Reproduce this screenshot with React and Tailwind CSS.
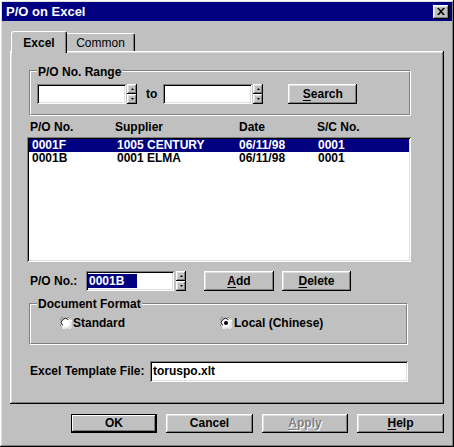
import React from 'react';

const raised = 'shadow-[inset_-1px_-1px_0_#000,inset_1px_1px_0_#fff,inset_-2px_-2px_0_#808080,inset_2px_2px_0_#dfdfdf]';
const sunken = 'shadow-[inset_1px_1px_0_#808080,inset_-1px_-1px_0_#fff,inset_2px_2px_0_#000,inset_-2px_-2px_0_#dfdfdf]';

const Spinner = ({ className = '' }) => (
  <div className={`flex flex-col w-[10px] h-[20px] ${className}`}>
    <div className={`h-[10px] flex items-center justify-center bg-[#c0c0c0] ${raised}`}>
      <svg width="3" height="2" viewBox="0 0 3 2"><path d="M1.5 0L3 2H0z" fill="#000" /></svg>
    </div>
    <div className={`h-[10px] flex items-center justify-center bg-[#c0c0c0] ${raised}`}>
      <svg width="3" height="2" viewBox="0 0 3 2"><path d="M0 0H3L1.5 2z" fill="#000" /></svg>
    </div>
  </div>
);

const Button = ({ children, className = '', def = false }) => (
  <div
    className={`flex items-center justify-center bg-[#c0c0c0] ${
      def
        ? 'shadow-[inset_0_0_0_1px_#000,inset_-2px_-2px_0_#000,inset_2px_2px_0_#fff,inset_-3px_-3px_0_#808080]'
        : raised
    } ${className}`}
  >
    {children}
  </div>
);

const Radio = ({ checked }) => (
  <svg width="12" height="12" viewBox="0 0 12 12" className="shrink-0">
    <circle cx="6" cy="6" r="5.5" fill="#fff" />
    <path d="M1.2 9.5A5.5 5.5 0 0 1 9.5 1.2" stroke="#808080" strokeWidth="1" fill="none" />
    <path d="M2.6 8.4A4 4 0 0 1 8.4 2.6" stroke="#000" strokeWidth="1" fill="none" />
    <path d="M10.8 2.5A5.5 5.5 0 0 1 2.5 10.8" stroke="#fff" strokeWidth="1" fill="none" />
    <path d="M9.4 3.6A4 4 0 0 1 3.6 9.4" stroke="#dfdfdf" strokeWidth="1" fill="none" />
    {checked && <circle cx="6" cy="6" r="2" fill="#000" />}
  </svg>
);

const Group = ({ title, titleTop, className = '', children }) => (
  <div className={`relative border border-t-[#808080] border-l-[#808080] border-b-white border-r-white ${className}`}>
    <div className="h-full border border-t-white border-l-white border-b-[#808080] border-r-[#808080]">
      {children}
    </div>
    <div className={`absolute left-[7px] ${titleTop} bg-[#c0c0c0] px-[1px] leading-[13px]`}>{title}</div>
  </div>
);

const rows = [
  { po: '0001F', sup: '1005 CENTURY', date: '06/11/98', sc: '0001', sel: true },
  { po: '0001B', sup: '0001 ELMA', date: '06/11/98', sc: '0001', sel: false },
];

export default function App() {
  return (
    <div
      className={`w-[454px] h-[447px] bg-[#c0c0c0] p-[2px] font-['Liberation_Sans',Arial,sans-serif] font-bold text-[12px] leading-[13px] text-black ${raised}`}
    >
      {/* title bar */}
      <div className="h-[19px] bg-[#000080] flex items-center justify-between pl-[4px] pr-[3px]">
        <span className="text-white text-[13px] leading-[14px]">P/O on Excel</span>
        <div className={`w-[16px] h-[14px] flex items-center justify-center ${raised} bg-[#c0c0c0]`}>
          <svg width="8" height="7" viewBox="0 0 8 7">
            <path d="M0 0h2l2 2.2L6 0h2L5 3.5 8 7H6L4 4.8 2 7H0l3-3.5z" fill="#000" />
          </svg>
        </div>
      </div>

      <div className="pl-[8px] pt-[10px]">
        {/* tabs */}
        <div className="flex items-end h-[20px] ml-[1px]">
          <div className="relative z-10 w-[56px] h-[22px] -mb-[2px] bg-[#c0c0c0] border-t border-l border-white border-r border-r-black rounded-t-[3px] shadow-[inset_-1px_0_0_#808080] flex justify-center pt-[5px]">
            Excel
          </div>
          <div className="w-[68px] h-[18px] bg-[#c0c0c0] border-t border-white border-r border-r-black rounded-tr-[3px] shadow-[inset_-1px_0_0_#808080] flex justify-center pt-[3px] font-normal">
            Common
          </div>
        </div>

        {/* panel */}
        <div className={`w-[434px] h-[353px] bg-[#c0c0c0] ${raised} flex flex-col`}>
          <Group title="P/O No. Range" titleTop="top-[-5px]" className="ml-[19px] mt-[19px] w-[382px] h-[46px]">
            <div className="flex items-center pt-[12px] pl-[6px]">
              <div className={`w-[89px] h-[20px] bg-white ${sunken}`} />
              <Spinner className="ml-[1px]" />
              <span className="ml-[9px] mr-[6px]">to</span>
              <div className={`w-[89px] h-[20px] bg-white ${sunken}`} />
              <Spinner className="ml-[1px]" />
              <Button className="ml-[25px] w-[69px] h-[20px]">
                <span><span className="underline underline-offset-2">S</span>earch</span>
              </Button>
            </div>
          </Group>

          {/* list headers */}
          <div className="grid grid-cols-[85px_124px_78px_1fr] ml-[20px] mt-[5px] h-[13px]">
            <span>P/O No.</span>
            <span>Supplier</span>
            <span>Date</span>
            <span>S/C No.</span>
          </div>

          {/* list */}
          <div className={`ml-[17px] mt-[3px] w-[384px] h-[125px] bg-white p-[2px] ${sunken}`}>
            {rows.map((r) => (
              <div
                key={r.po}
                className={`grid grid-cols-[85px_122px_79px_1fr] h-[13px] pl-[3px] ${r.sel ? 'bg-[#000080] text-white' : ''}`}
              >
                <span>{r.po}</span>
                <span>{r.sup}</span>
                <span>{r.date}</span>
                <span>{r.sc}</span>
              </div>
            ))}
          </div>

          {/* P/O No. row */}
          <div className="flex items-center ml-[20px] mt-[9px] h-[20px]">
            <span className="w-[56px]">P/O No.:</span>
            <div className={`w-[88px] h-[20px] bg-white ${sunken} flex items-center pl-[2px]`}>
              <span className="inline-block w-[49px] h-[14px] bg-[#000080] text-white leading-[14px] pl-[1px]">0001B</span>
            </div>
            <Spinner className="ml-[2px]" />
            <Button className="ml-[18px] w-[70px] h-[20px]">
              <span><span className="underline underline-offset-2">A</span>dd</span>
            </Button>
            <Button className="ml-[8px] w-[69px] h-[20px]">
              <span><span className="underline underline-offset-2">D</span>elete</span>
            </Button>
          </div>

          <Group title="Document Format" titleTop="top-[-6px]" className="ml-[19px] mt-[12px] w-[379px] h-[42px]">
            <div className="flex items-center pt-[12px] pl-[29px] h-[24px]">
              <div className="flex items-center w-[160px]">
                <Radio />
                <span className="ml-[1px]">Standard</span>
              </div>
              <div className="flex items-center">
                <Radio checked />
                <span className="ml-[2px]">Local (Chinese)</span>
              </div>
            </div>
          </Group>

          {/* template */}
          <div className="flex items-center ml-[20px] mt-[16px] h-[21px]">
            <span className="w-[120px]">Excel Template File:</span>
            <div className={`w-[258px] h-[21px] bg-white ${sunken} flex items-center pl-[3px]`}>
              <span>toruspo.xlt</span>
            </div>
          </div>
        </div>

        {/* buttons */}
        <div className="flex mt-[10px] ml-[61px] gap-[9px]">
          <Button def className="w-[86px] h-[19px]">OK</Button>
          <Button className="w-[87px] h-[19px]">Cancel</Button>
          <Button className="w-[86px] h-[19px] text-[#808080] [text-shadow:1px_1px_0_#fff]">
            <span><span className="underline underline-offset-2">A</span>pply</span>
          </Button>
          <Button className="w-[87px] h-[19px]">
            <span><span className="underline underline-offset-2">H</span>elp</span>
          </Button>
        </div>
      </div>
    </div>
  );
}
